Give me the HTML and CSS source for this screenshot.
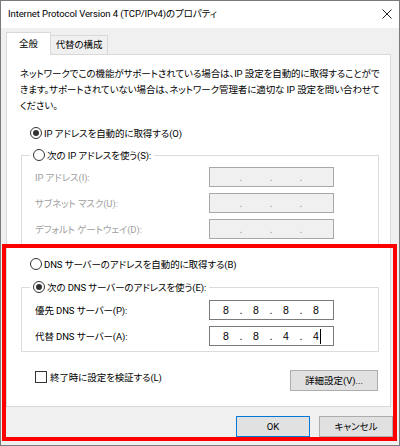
FILE: index.html
```html
<!DOCTYPE html>
<html lang="ja">
<head>
<meta charset="utf-8">
<link rel="stylesheet" href="styles.css">
</head>
<body>
<div class="window">
  <div class="titlebar">
    <span class="title">Internet Protocol Version 4 (TCP/IPv4)のプロパティ</span>
    <svg class="close" width="10" height="10" viewBox="0 0 10 10"><path d="M0.5 0.5 L9.5 9.5 M9.5 0.5 L0.5 9.5" stroke="#222" stroke-width="1" fill="none"/></svg>
  </div>
  <div class="body">
    <div class="tabs">
      <div class="tab active">全般</div>
      <div class="tab">代替の構成</div>
    </div>
    <div class="panel">
      <p class="desc">ネットワークでこの機能がサポートされている場合は、IP 設定を自動的に取得することがで<br>きます。サポートされていない場合は、ネットワーク管理者に適切な IP 設定を問い合わせて<br>ください。</p>
      <div class="option"><span class="radio checked"></span>IP アドレスを自動的に取得する(O)</div>
      <div class="group">
        <div class="legend"><span class="radio"></span>次の IP アドレスを使う(S):</div>
        <div class="field first disabled"><span class="label">IP アドレス(I):</span><div class="ip"><span class="oct"></span><span class="dot">.</span><span class="oct"></span><span class="dot">.</span><span class="oct"></span><span class="dot">.</span><span class="oct"></span></div></div>
        <div class="field disabled"><span class="label">サブネット マスク(U):</span><div class="ip"><span class="oct"></span><span class="dot">.</span><span class="oct"></span><span class="dot">.</span><span class="oct"></span><span class="dot">.</span><span class="oct"></span></div></div>
        <div class="field disabled"><span class="label">デフォルト ゲートウェイ(D):</span><div class="ip"><span class="oct"></span><span class="dot">.</span><span class="oct"></span><span class="dot">.</span><span class="oct"></span><span class="dot">.</span><span class="oct"></span></div></div>
      </div>
      <div class="option dns"><span class="radio"></span>DNS サーバーのアドレスを自動的に取得する(B)</div>
      <div class="group group-dns">
        <div class="legend"><span class="radio checked"></span>次の DNS サーバーのアドレスを使う(E):</div>
        <div class="field first"><span class="label">優先 DNS サーバー(P):</span><div class="ip"><span class="oct">8</span><span class="dot">.</span><span class="oct">8</span><span class="dot">.</span><span class="oct">8</span><span class="dot">.</span><span class="oct">8</span></div></div>
        <div class="field"><span class="label">代替 DNS サーバー(A):</span><div class="ip"><span class="oct">8</span><span class="dot">.</span><span class="oct">8</span><span class="dot">.</span><span class="oct">4</span><span class="dot">.</span><span class="oct">4<span class="caret"></span></span></div></div>
      </div>
      <div class="bottom-row">
        <div class="check"><span class="box"></span>終了時に設定を検証する(L)</div>
        <button class="btn advanced">詳細設定(V)...</button>
      </div>
    </div>
    <div class="footer">
      <button class="btn ok">OK</button>
      <button class="btn">キャンセル</button>
    </div>
  </div>
  <div class="highlight"></div>
</div>
</body>
</html>
```

FILE: styles.css
```css
* { box-sizing: border-box; }
html, body { margin: 0; padding: 0; background: #ffffff; }
body {
  font-family: Roboto, "Noto Sans CJK JP", sans-serif;
  font-size: 9.5px;
  color: #000;
  font-feature-settings: "palt";
  letter-spacing: -0.1px;
}
.window {
  position: relative;
  width: 400px;
  height: 446px;
  border: 1px solid #7a7a7a;
  background: #f0f0f0;
  overflow: hidden;
}
.titlebar {
  height: 27px;
  background: #ffffff;
  display: flex;
  align-items: center;
  justify-content: space-between;
  padding: 0 7px 0 7px;
}
.title { line-height: 16px; color: #000; margin-top: -1px; }
.close { display: block; margin-top: -1px; }
.body {
  padding: 4px 8px 0 5px;
}
.tabs {
  display: flex;
  align-items: flex-end;
  height: 22px;
}
.tab {
  height: 19px;
  border: 1px solid #d9d9d9;
  border-bottom: none;
  border-left: none;
  background: #f0f0f0;
  line-height: 18px;
  width: 57px;
  text-align: center;
  white-space: nowrap;
}
.tab.active {
  position: relative;
  z-index: 1;
  height: 23px;
  margin-bottom: -1px;
  width: 45px;
  border-left: 1px solid #d9d9d9;
  background: #ffffff;
  line-height: 21px;
}
.panel {
  height: 353px;
  background: #ffffff;
  border: 1px solid #d9d9d9;
}
.desc {
  margin: 11px 0 0 13px;
  line-height: 16px;
  white-space: nowrap;
}
.option {
  display: flex;
  align-items: center;
  height: 16px;
  margin-top: 11px;
  padding-left: 23px;
  white-space: nowrap;
}
.option.dns { margin-top: 11px; }
.radio {
  width: 12px;
  height: 12px;
  border: 1px solid #333;
  border-radius: 50%;
  margin-right: 2px;
  background: #fff;
  display: flex;
  align-items: center;
  justify-content: center;
  flex: none;
}
.radio.checked::after {
  content: "";
  width: 6px;
  height: 6px;
  border-radius: 50%;
  background: #333;
}
.group {
  margin: 14px 11px 0 14px;
  border: 1px solid #dcdcdc;
  padding: 0 0 5px 13px;
}
.group-dns { margin-top: 15px; }
.legend {
  display: flex;
  align-items: center;
  width: fit-content;
  height: 16px;
  margin: -9px 0 0 -5px;
  padding: 0 3px 0 3px;
  background: #fff;
  white-space: nowrap;
}
.field {
  display: flex;
  align-items: center;
  height: 20px;
  margin-top: 6px;
}
.field.first { margin-top: 4px; }
.group-dns .field.first { margin-top: 5px; }
.label { width: 174px; flex: none; white-space: nowrap; }
.field.disabled .label { color: #a0a0a0; }
.ip {
  width: 125px;
  height: 20px;
  border: 1px solid #7a7a7a;
  background: #fff;
  display: flex;
  align-items: center;
  padding-left: 3px;
  font-family: "Liberation Sans", sans-serif;
  font-size: 10.5px;
  letter-spacing: 0;
}
.field.disabled .ip {
  background: #f0f0f0;
  border-color: #a8a8a8;
  color: #9a9a9a;
}
.oct {
  width: 26px;
  text-align: center;
  position: relative;
}
.dot { width: 4px; text-align: center; }
.caret {
  position: absolute;
  left: 17px;
  top: -1px;
  width: 1px;
  height: 15px;
  background: #000;
}
.bottom-row {
  display: flex;
  justify-content: space-between;
  align-items: flex-start;
  margin-top: 17px;
  padding: 0 12px 0 28px;
}
.check {
  display: flex;
  align-items: center;
  height: 16px;
  white-space: nowrap;
}
.box {
  width: 12px;
  height: 12px;
  border: 1px solid #333;
  margin-right: 3px;
  background: #fff;
}
.btn {
  font-family: Roboto, "Noto Sans CJK JP", sans-serif;
  font-feature-settings: "palt";
  font-size: 9.5px;
  color: #000;
  height: 21px;
  background: #e1e1e1;
  border: 1px solid #adadad;
  padding: 0;
  line-height: 18px;
  white-space: nowrap;
}
.advanced { width: 88px; margin-top: 1px; }
.footer {
  display: flex;
  justify-content: flex-end;
  gap: 9px;
  margin: 9px -2px 0 0;
}
.footer .btn { width: 74px; }
.btn.ok { border-color: #0078d7; }
.highlight {
  position: absolute;
  left: 1px;
  top: 243px;
  width: 395px;
  height: 197px;
  border: 4px solid #ff0000;
  pointer-events: none;
}
```
